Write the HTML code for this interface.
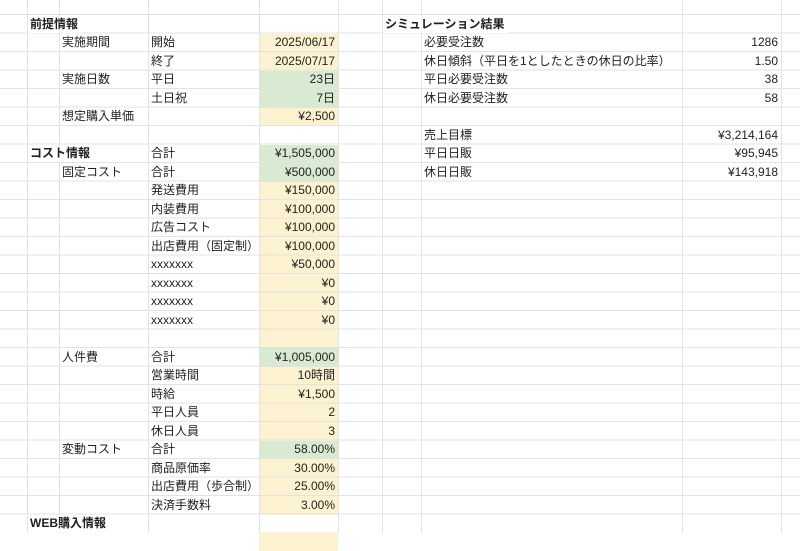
<!DOCTYPE html>
<html><head><meta charset="utf-8"><style>
body{margin:0;width:800px;height:533px;overflow:hidden;background:#fff;font-family:"Liberation Sans","Noto Sans CJK JP",sans-serif;font-size:12px;color:#1f1f1f;position:relative}
.hl{position:absolute;left:0;top:0;width:800px;height:533px;z-index:2;background:repeating-linear-gradient(to bottom,transparent 0,transparent 17.5px,#e3e3e3 17.5px,#e3e3e3 18.5px);background-position:0 -3.5px;pointer-events:none}
.vl{position:absolute;top:0;height:533px;width:1px;background:#e3e3e3;z-index:2}
.c{position:absolute;height:18.5px;line-height:18.5px;white-space:nowrap}
.t{position:absolute;height:16px;line-height:16px;white-space:nowrap;z-index:3;background:transparent;margin-top:-1px}
.w{background:#fff;margin-top:0;line-height:14px}
.r{text-align:right}
.y{background:#fdf2cf;z-index:1;left:259px;width:79px}
.g{background:#d9ead3;z-index:1;left:259px;width:79px}
b{font-weight:bold}
</style></head><body>
<div class="hl"></div>
<div class="vl" style="left:27px"></div><div class="vl" style="left:59px"></div><div class="vl" style="left:148px"></div><div class="vl" style="left:259px"></div><div class="vl" style="left:338px"></div><div class="vl" style="left:382px"></div><div class="vl" style="left:421px"></div><div class="vl" style="left:682px"></div><div class="vl" style="left:781px"></div>

<div class="c y" style="top:33.5px"></div>
<div class="c y" style="top:52px"></div>
<div class="c g" style="top:70.5px"></div>
<div class="c g" style="top:89px"></div>
<div class="c y" style="top:107.5px"></div>
<div class="c g" style="top:144.5px"></div>
<div class="c g" style="top:163px"></div>
<div class="c y" style="top:181.5px;height:166.5px"></div>
<div class="c g" style="top:348px"></div>
<div class="c y" style="top:366.5px;height:74px"></div>
<div class="c g" style="top:440.5px"></div>
<div class="c y" style="top:459px;height:55.5px"></div>
<div class="c y" style="top:532px"></div>

<div class="t w" style="left:28px;top:16.5px;padding:0 4px 0 2px"><b>前提情報</b></div>
<div class="t w" style="left:383px;top:16.5px;padding:0 4px 0 2px"><b>シミュレーション結果</b></div>

<div class="t" style="left:62px;top:35px">実施期間</div>
<div class="t" style="left:151px;top:35px">開始</div>
<div class="t r" style="left:259px;width:76px;top:35px">2025/06/17</div>
<div class="t" style="left:424px;top:35px">必要受注数</div>
<div class="t r" style="left:682px;width:96px;top:35px">1286</div>

<div class="t" style="left:151px;top:53.5px">終了</div>
<div class="t r" style="left:259px;width:76px;top:53.5px">2025/07/17</div>
<div class="t" style="left:424px;top:53.5px">休日傾斜（平日を1としたときの休日の比率）</div>
<div class="t r" style="left:682px;width:96px;top:53.5px">1.50</div>

<div class="t" style="left:62px;top:72px">実施日数</div>
<div class="t" style="left:151px;top:72px">平日</div>
<div class="t r" style="left:259px;width:76px;top:72px">23日</div>
<div class="t" style="left:424px;top:72px">平日必要受注数</div>
<div class="t r" style="left:682px;width:96px;top:72px">38</div>

<div class="t" style="left:151px;top:90.5px">土日祝</div>
<div class="t r" style="left:259px;width:76px;top:90.5px">7日</div>
<div class="t" style="left:424px;top:90.5px">休日必要受注数</div>
<div class="t r" style="left:682px;width:96px;top:90.5px">58</div>

<div class="t" style="left:62px;top:109px">想定購入単価</div>
<div class="t r" style="left:259px;width:76px;top:109px">¥2,500</div>

<div class="t" style="left:424px;top:127.5px">売上目標</div>
<div class="t r" style="left:682px;width:96px;top:127.5px">¥3,214,164</div>

<div class="t w" style="left:28px;top:146px;padding:0 4px 0 2px"><b>コスト情報</b></div>
<div class="t" style="left:151px;top:146px">合計</div>
<div class="t r" style="left:259px;width:76px;top:146px">¥1,505,000</div>
<div class="t" style="left:424px;top:146px">平日日販</div>
<div class="t r" style="left:682px;width:96px;top:146px">¥95,945</div>

<div class="t" style="left:62px;top:164.5px">固定コスト</div>
<div class="t" style="left:151px;top:164.5px">合計</div>
<div class="t r" style="left:259px;width:76px;top:164.5px">¥500,000</div>
<div class="t" style="left:424px;top:164.5px">休日日販</div>
<div class="t r" style="left:682px;width:96px;top:164.5px">¥143,918</div>

<div class="t" style="left:151px;top:183px">発送費用</div><div class="t r" style="left:259px;width:76px;top:183px">¥150,000</div>
<div class="t" style="left:151px;top:201.5px">内装費用</div><div class="t r" style="left:259px;width:76px;top:201.5px">¥100,000</div>
<div class="t" style="left:151px;top:220px">広告コスト</div><div class="t r" style="left:259px;width:76px;top:220px">¥100,000</div>
<div class="t" style="left:151px;top:238.5px">出店費用（固定制）</div><div class="t r" style="left:259px;width:76px;top:238.5px">¥100,000</div>
<div class="t" style="left:151px;top:257px">xxxxxxx</div><div class="t r" style="left:259px;width:76px;top:257px">¥50,000</div>
<div class="t" style="left:151px;top:275.5px">xxxxxxx</div><div class="t r" style="left:259px;width:76px;top:275.5px">¥0</div>
<div class="t" style="left:151px;top:294px">xxxxxxx</div><div class="t r" style="left:259px;width:76px;top:294px">¥0</div>
<div class="t" style="left:151px;top:312.5px">xxxxxxx</div><div class="t r" style="left:259px;width:76px;top:312.5px">¥0</div>

<div class="t" style="left:62px;top:349.5px">人件費</div>
<div class="t" style="left:151px;top:349.5px">合計</div><div class="t r" style="left:259px;width:76px;top:349.5px">¥1,005,000</div>
<div class="t" style="left:151px;top:368px">営業時間</div><div class="t r" style="left:259px;width:76px;top:368px">10時間</div>
<div class="t" style="left:151px;top:386.5px">時給</div><div class="t r" style="left:259px;width:76px;top:386.5px">¥1,500</div>
<div class="t" style="left:151px;top:405px">平日人員</div><div class="t r" style="left:259px;width:76px;top:405px">2</div>
<div class="t" style="left:151px;top:423.5px">休日人員</div><div class="t r" style="left:259px;width:76px;top:423.5px">3</div>

<div class="t" style="left:62px;top:442px">変動コスト</div>
<div class="t" style="left:151px;top:442px">合計</div><div class="t r" style="left:259px;width:76px;top:442px">58.00%</div>
<div class="t" style="left:151px;top:460.5px">商品原価率</div><div class="t r" style="left:259px;width:76px;top:460.5px">30.00%</div>
<div class="t" style="left:151px;top:479px">出店費用（歩合制）</div><div class="t r" style="left:259px;width:76px;top:479px">25.00%</div>
<div class="t" style="left:151px;top:497.5px">決済手数料</div><div class="t r" style="left:259px;width:76px;top:497.5px">3.00%</div>

<div class="t w" style="left:28px;top:516px;padding:0 4px 0 2px"><b>WEB購入情報</b></div>
</body></html>
